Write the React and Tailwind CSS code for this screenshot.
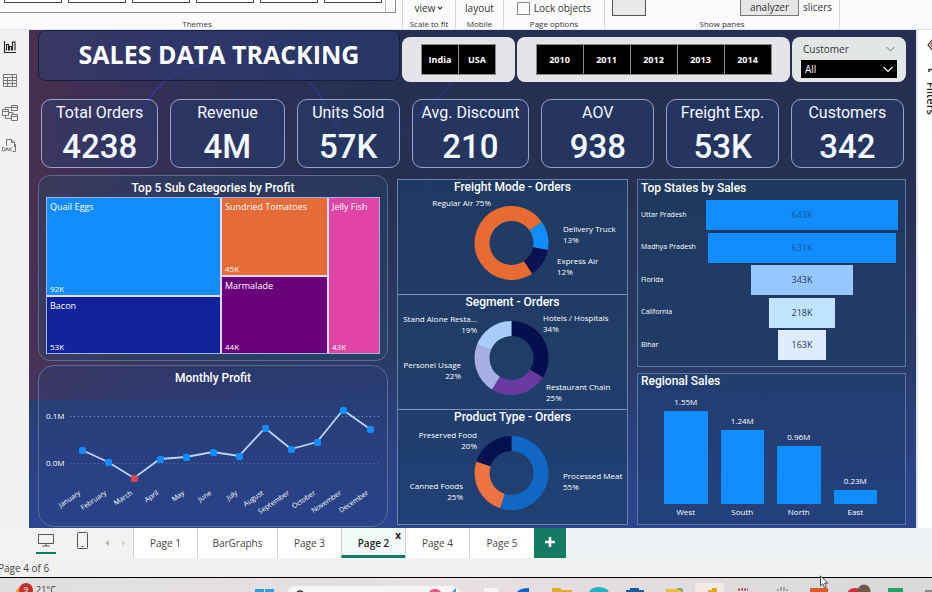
import React from "react";

const SEGOE = "font-['Open_Sans','Noto_Sans',sans-serif]";
const DIN = "font-[Roboto,sans-serif]";

function RibbonGroup({ label, className, children }) {
  return (
    <section className={`flex shrink-0 flex-col justify-end border-r border-[#d8d8d8] ${className}`}>
      <div className="flex h-[18px] items-end justify-center">{children}</div>
      <p className="h-3 text-center text-[8px] leading-[14px] text-[#333]">{label}</p>
    </section>
  );
}

function Ribbon() {
  return (
    <header className="flex h-[30px] shrink-0 overflow-hidden border-b border-[#dfe3ea] bg-[#fbfbfb] text-[#333]">
      <section className="flex w-[403px] shrink-0 flex-col border-r border-[#d8d8d8]">
        <div className="flex h-[13px] w-[396px] items-start gap-[6px] border-r border-b border-[#8c8c8c] pl-1">
          {[0, 1, 2, 3, 4, 5].map((i) => (
            <button key={i} type="button" aria-label={`Theme ${i + 1}`} className="h-[3px] w-[58px] border-x border-b border-[#444] bg-white" />
          ))}
          <span className="-ml-[3px] h-3 border-l border-[#bbb]" />
        </div>
        <p className="mt-[5px] pr-2 text-center text-[8px] leading-3 text-[#333]">Themes</p>
      </section>
      <RibbonGroup label="Scale to fit" className="w-[53px]">
        <button type="button" className="flex items-center gap-0.5 text-[10px] leading-[18px]">
          view
          <svg width="6" height="5" viewBox="0 0 6 5" fill="none" stroke="#333" strokeWidth="1.2"><path d="M1 1l2 2 2-2" /></svg>
        </button>
      </RibbonGroup>
      <RibbonGroup label="Mobile" className="w-[48px]">
        <button type="button" className="text-[10px] leading-[18px]">layout</button>
      </RibbonGroup>
      <RibbonGroup label="Page options" className="w-[101px]">
        <label className="flex items-center gap-1 text-[10px] leading-[18px]">
          <input type="checkbox" className="size-[13px] appearance-none border border-[#888] bg-white" />
          Lock objects
        </label>
      </RibbonGroup>
      <RibbonGroup label="Show panes" className="w-[235px]">
        <div className="flex h-[18px] w-full items-start pl-[7px]">
          <button type="button" aria-label="Pane" className="h-[17px] w-[34px] border-x border-b border-[#555] bg-[#e9e9e9]" />
          <button type="button" className="ml-[94px] h-[17px] w-[59px] border-x border-b border-[#777] bg-[#e6e6e6] text-[10px] leading-4">analyzer</button>
          <button type="button" className="ml-1 text-[10px] leading-4">slicers</button>
        </div>
      </RibbonGroup>
    </header>
  );
}

function LeftRail() {
  const btn = "flex h-[33px] w-full items-center justify-start pl-[2px]";
  return (
    <nav aria-label="Views" className="w-[29px] shrink-0 bg-[#f1f1f1]">
      <button type="button" aria-label="Report view" className={btn}>
        <svg width="15" height="14" viewBox="0 0 15 14" fill="none" stroke="#222" strokeWidth="1.1">
          <path d="M2.5 1v11.5H14" /><path d="M4.5 10.500V4.500h2v6M7.500 10.500V6.500h2v4M10.500 10.500V2h2.500v8.500" />
        </svg>
      </button>
      <button type="button" aria-label="Table view" className={btn}>
        <svg width="15" height="14" viewBox="0 0 15 14" fill="none" stroke="#777" strokeWidth="1">
          <path d="M1.500 1.500h13v12h-13zM1.500 4.500h13M1.500 7.500h13M1.500 10.500h13M5.500 4.500v9M10.500 1.500v12" />
        </svg>
      </button>
      <button type="button" aria-label="Model view" className={btn}>
        <svg width="17" height="16" viewBox="0 0 17 16" fill="none" stroke="#777" strokeWidth="1">
          <path d="M.5 4.500h6v6h-6zM.5 6.500h6M9.500 .5h6v5h-6zM9.500 2.500h6M9.500 9.500h6v6h-6zM9.500 11.500h6M3.500 4.500v-2h6M6.500 7.500h4.500v2M3.500 10.500v3h6" />
        </svg>
      </button>
      <button type="button" aria-label="DAX query view" className={btn}>
        <svg width="15" height="15" viewBox="0 0 15 15" fill="none" stroke="#777" strokeWidth="1">
          <path d="M4.500 8V1.500h5l3 3V9M9.500 1.500v3h3M13.500 6v7.500h-3" />
          <path d="M.5 9.500v3.500h1c1 0 1.500-.8 1.500-1.700S2.500 9.500 1.500 9.500zM3.500 13l1.500-3.500L6.500 13M7 9.500L9.500 13M9.500 9.500L7 13" />
        </svg>
      </button>
    </nav>
  );
}

function RightRail() {
  return (
    <aside className="flex w-4 shrink-0 flex-col items-start overflow-hidden border-l-2 border-[#e4e6ee] bg-white pt-2 pl-[9px]">
      <svg className="shrink-0" width="14" height="14" viewBox="0 0 14 14" fill="none" stroke="#444" strokeWidth="1.2"><path d="M6 1L1 7l5 6" /><circle cx="6" cy="7" r="2" stroke="#b33" /></svg>
      <svg className="mt-4 shrink-0" width="10" height="6" viewBox="0 0 10 6" fill="none" stroke="#333" strokeWidth="1.5"><path d="M2 4V1.500h8" /></svg>
      <p className="mt-2 w-2 shrink-0 text-[11px] leading-2 font-semibold text-[#222] [writing-mode:vertical-rl]">Filters</p>
    </aside>
  );
}

function Backdrop() {
  return (
    <svg className="absolute inset-0 size-full" viewBox="0 0 887 498" preserveAspectRatio="none" fill="none" aria-hidden="true">
      <defs>
        <linearGradient id="base" x1="0" y1="0" x2="0" y2="1">
          <stop offset="0" stopColor="#262f52" /><stop offset=".3" stopColor="#272f52" /><stop offset=".65" stopColor="#2a3a66" /><stop offset="1" stopColor="#2b448c" />
        </linearGradient>
        <linearGradient id="left" x1="0" y1="0" x2="1" y2="0">
          <stop offset="0" stopColor="#51304f" stopOpacity=".8" /><stop offset=".14" stopColor="#45305c" stopOpacity=".5" /><stop offset=".4" stopColor="#333366" stopOpacity="0" />
        </linearGradient>
        <linearGradient id="glow" x1="0" y1="0" x2="0" y2="1">
          <stop offset="0" stopColor="#2a4290" stopOpacity="0" /><stop offset="1" stopColor="#2a4690" stopOpacity=".6" />
        </linearGradient>
      </defs>
      <rect width="887" height="498" fill="url(#base)" />
      <rect width="887" height="370" fill="url(#left)" />
      <rect y="330" width="887" height="168" fill="url(#glow)" />
      <g stroke="#3f3bc4" strokeWidth="2">
        <path d="M112 82C130 48 160 30 200 34" opacity=".55" />
        <path d="M262 36C285 52 295 70 310 100" opacity=".35" />
        <path d="M40 300C70 160 130 20 240 12S370 90 420 200" opacity=".15" />
        <path d="M380 92C400 78 415 62 425 50" opacity=".3" />
        <path d="M0 345C70 330 90 310 110 285" opacity=".25" />
      </g>
    </svg>
  );
}

function Slicer({ name, options }) {
  return (
    <fieldset aria-label={name} className="flex items-center justify-center rounded-lg bg-[#e4e4e9]">
      <div className="flex gap-px bg-[#8b8b8b] p-px">
        {options.map((o) => (
          <button key={o} type="button" className={`h-[29px] bg-black text-center text-[9px] font-bold text-white ${name === "Year" ? "w-[46px]" : "w-9"}`}>{o}</button>
        ))}
      </div>
    </fieldset>
  );
}

function TopRow() {
  return (
    <div className="grid grid-cols-[362fr_113fr_273fr_114fr] gap-x-0.5">
      <div className="flex h-[51px] items-center justify-center rounded-lg border border-[#151d3d] bg-[#2c3d78]/50">
        <h1 className="pb-[3px] text-[25px] leading-8 font-bold text-white">SALES DATA TRACKING</h1>
      </div>
      <div className="grid pt-[7px]"><Slicer name="Country" options={["India", "USA"]} /></div>
      <div className="grid pt-[7px]"><Slicer name="Year" options={["2010", "2011", "2012", "2013", "2014"]} /></div>
      <div className="pt-[7px]">
        <div className="h-[45px] rounded-lg bg-[#e2e6e6] px-[9px] pt-[3px]">
          <label htmlFor="customer" className="flex h-[18px] items-center justify-between px-0.5 text-[10px] text-[#333]">
            Customer
            <svg width="9" height="6" viewBox="0 0 9 6" fill="none" stroke="#777"><path d="M.5 1l4 4 4-4" /></svg>
          </label>
          <div className="relative mt-[2px]">
            <select id="customer" className="block h-[18px] w-full appearance-none bg-black px-1 text-[10px] leading-[18px] text-white">
              <option>All</option>
            </select>
            <svg className="pointer-events-none absolute top-[6px] right-1" width="10" height="7" viewBox="0 0 10 7" fill="none" stroke="#fff" strokeWidth="1.1"><path d="M.5 1l4.500 4.500L9.500 1" /></svg>
          </div>
        </div>
      </div>
    </div>
  );
}

const KPIS = [
  ["Total Orders", "4238"], ["Revenue", "4M"], ["Units Sold", "57K"], ["Avg. Discount", "210"],
  ["AOV", "938"], ["Freight Exp.", "53K"], ["Customers", "342"],
];

function Kpis() {
  return (
    <div className="mt-[17px] grid grid-cols-[117fr_114fr_103fr_117fr_113fr_112fr_113fr] gap-x-3 pr-0.5 pl-[3px]">
      {KPIS.map(([label, value]) => (
        <section key={label} className={`flex h-[69px] flex-col items-center rounded-[10px] border border-[#98a3cc] bg-[#24417a]/35 pt-[3px] whitespace-nowrap text-[#f4f8ff] ${DIN}`}>
          <h2 className="text-[16px] leading-5">{label}</h2>
          <p className="mt-[5px] text-[33px] leading-[38px] font-medium">{value}</p>
        </section>
      ))}
    </div>
  );
}

function Tile({ name, value, className }) {
  return (
    <div className={`flex flex-col justify-between px-[3px] pt-[2px] text-white ${className}`}>
      <span className="text-[9px] leading-[14px] whitespace-nowrap">{name}</span>
      <span className="text-[8px] leading-[13px]">{value}</span>
    </div>
  );
}

function Treemap() {
  return (
    <section className="rounded-xl border border-[#5d6c90] bg-[#244a6c]/35 px-[7px] pb-[6px]">
      <h2 className={`pt-1 pb-px text-center text-[12px] leading-4 font-medium text-white ${DIN}`}>Top 5 Sub Categories by Profit</h2>
      <div className="grid h-[157px] grid-cols-[173fr_105fr_50fr] gap-0.5 border border-[#9fb3e6] bg-[#e3d9f2]">
        <div className="grid grid-rows-[98fr_56fr] gap-0.5">
          <Tile name="Quail Eggs" value="92K" className="bg-[#118dff]" />
          <Tile name="Bacon" value="53K" className="bg-[#12239e]" />
        </div>
        <div className="grid grid-rows-[78fr_76fr] gap-0.5">
          <Tile name="Sundried Tomatoes" value="45K" className="bg-[#e66c37]" />
          <Tile name="Marmalade" value="44K" className="bg-[#6b007b]" />
        </div>
        <Tile name="Jelly Fish" value="43K" className="bg-[#e044a7]" />
      </div>
    </section>
  );
}

const MONTHS = [
  ["January", 43, 68], ["February", 69, 80], ["March", 95, 96], ["April", 121, 77], ["May", 147, 75], ["June", 174, 70],
  ["July", 200, 74], ["August", 226, 46], ["September", 252, 67], ["October", 278, 60], ["November", 304, 28], ["December", 331, 47],
];

function MonthlyProfit() {
  return (
    <section className="rounded-2xl border border-[#5d6c90] bg-[#24407a]/30">
      <h2 className={`pt-1 text-center text-[12px] leading-4 font-medium text-white ${DIN}`}>Monthly Profit</h2>
      <svg className="block h-auto w-full" viewBox="0 4 348 140" role="img" aria-label="Monthly profit">
        <g stroke="#8f9cc0" strokeDasharray="1 3"><path d="M31 34.500H342" /><path d="M31 81.500H342" opacity=".6" /></g>
        <g fill="#fff" fontSize="8"><text x="7" y="37">0.1M</text><text x="7" y="84">0.0M</text></g>
        <polyline fill="none" stroke="#b8d4fa" strokeWidth="1.800" points={MONTHS.map((m) => `${m[1]},${m[2]}`).join(" ")} />
        {MONTHS.map(([name, x, y]) => (
          <g key={name}>
            <rect x={x - 3} y={y - 3} width="7" height="7" rx="2" fill={name === "March" ? "#d64550" : "#118dff"} />
            <text fill="#fff" fontSize="7" textAnchor="end" transform={`translate(${x - 1} 112) rotate(-34)`}>{name}</text>
          </g>
        ))}
      </svg>
    </section>
  );
}

function arc(a0, a1) {
  const cx = 113.5, cy = 49, R = 37, r = 22;
  const p = (a, q) => `${cx + q * Math.sin((a * Math.PI) / 180)} ${cy - q * Math.cos((a * Math.PI) / 180)}`;
  const big = a1 - a0 > 180 ? 1 : 0;
  return `M${p(a0, R)}A${R} ${R} 0 ${big} 1 ${p(a1, R)}L${p(a1, r)}A${r} ${r} 0 ${big} 0 ${p(a0, r)}Z`;
}

const DONUTS = [
  {
    title: "Freight Mode - Orders",
    slices: [[55, 101, "#118dff"], [101, 146, "#0a1250"], [146, 415, "#e96b34"]],
    labels: [[93, 12, "end", ["Regular Air 75%"]], [165, 38, "start", ["Delivery Truck", "13%"]], [159, 70, "start", ["Express Air", "12%"]]],
  },
  {
    title: "Segment - Orders",
    slices: [[0, 122, "#040f4e"], [122, 212, "#6b3aa0"], [212, 291, "#a9afe4"], [291, 360, "#a9cdfb"]],
    labels: [[79, 13, "end", ["Stand Alone Resta...", "19%"]], [145, 12, "start", ["Hotels / Hospitals", "34%"]], [63, 59, "end", ["Personel Usage", "22%"]], [148, 81, "start", ["Restaurant Chain", "25%"]]],
  },
  {
    title: "Product Type - Orders",
    slices: [[0, 198, "#1068c4"], [198, 288, "#ed7440"], [288, 360, "#04134f"]],
    labels: [[79, 14, "end", ["Preserved Food", "20%"]], [65, 65, "end", ["Canned Foods", "25%"]], [165, 55, "start", ["Processed Meat", "55%"]]],
  },
];

function Donuts() {
  return (
    <div className="mt-1 divide-y divide-[#7f92b8] self-start border border-[#6f82a8] bg-[#1d3f6a]/70">
      {DONUTS.map((d) => (
        <section key={d.title}>
          <h2 className={`text-center text-[12px] leading-[14px] font-medium text-white ${DIN}`}>{d.title}</h2>
          <svg className="block h-auto w-full" viewBox="0 0 229 100" role="img" aria-label={d.title}>
            {d.slices.map(([a, b, c]) => <path key={c} d={arc(a, b)} fill={c} />)}
            {d.labels.map(([x, y, anchor, lines]) => (
              <text key={lines[0]} fill="#fff" fontSize="8" textAnchor={anchor}>
                {lines.map((l, i) => <tspan key={l} x={x} y={y + i * 11}>{l}</tspan>)}
              </text>
            ))}
          </svg>
        </section>
      ))}
    </div>
  );
}

const STATES = [
  ["Uttar Pradesh", 643, "bg-[#118dff] text-[#1c5598]"], ["Madhya Pradesh", 631, "bg-[#118dff] text-[#1c5598]"],
  ["Florida", 343, "bg-[#96c8ff] text-[#253a55]"], ["California", 218, "bg-[#c0e3ff] text-[#253a55]"], ["Bihar", 163, "bg-[#deecff] text-[#253a55]"],
];

const REGIONS = [["West", 1.55], ["South", 1.24], ["North", 0.96], ["East", 0.23]];

function TopStates() {
  return (
    <section className="border border-[#5d76a0] bg-[#1c3d66]/70 pr-[7px] pb-[6px] pl-[3px]">
      <h2 className={`text-[12px] leading-4 font-medium text-white ${DIN}`}>Top States by Sales</h2>
      <ul className="mt-1 flex h-[160px] flex-col justify-between">
        {STATES.map(([name, v, cls]) => (
          <li key={name} className="flex items-center">
            <span className="w-[65px] shrink-0 text-[7px] whitespace-nowrap text-white">{name}</span>
            <span className="flex flex-1 justify-center">
              <span className={`h-[30px] text-center text-[9px] leading-[30px] ${cls}`} style={{ width: `${(v / 643) * 100}%` }}>{v}K</span>
            </span>
          </li>
        ))}
      </ul>
    </section>
  );
}

function RegionalSales() {
  return (
    <section className="border border-[#5d76a0] bg-[#1e4070]/60 pb-[6px]">
      <h2 className={`pl-[3px] text-[12px] leading-[15px] font-medium text-white ${DIN}`}>Regional Sales</h2>
      <div className="mt-2 grid grid-cols-4 gap-x-[13px] pr-[28px] pl-[26px]">
        {REGIONS.map(([name, v]) => (
          <div key={name} className="flex h-[121px] flex-col items-center justify-end text-white">
            <span className="text-[8px] leading-[14px]">{v.toFixed(2)}M</span>
            <span className="mt-[2px] w-full shrink-0 bg-[#118dff]" style={{ height: `${Math.round(v * 60)}px` }} />
            <span className="mt-[2px] text-[8px] leading-3">{name}</span>
          </div>
        ))}
      </div>
    </section>
  );
}

function Report() {
  return (
    <main className="relative min-w-0 flex-1 overflow-hidden">
      <Backdrop />
      <div className="relative pr-[10px] pl-[9px]">
        <TopRow />
        <Kpis />
        <div className="mt-[7px] grid grid-cols-[350fr_231fr_269fr] gap-x-[9px]">
          <div className="flex flex-col gap-1"><Treemap /><MonthlyProfit /></div>
          <Donuts />
          <div className="mt-1 flex flex-col gap-[6px]"><TopStates /><RegionalSales /></div>
        </div>
      </div>
    </main>
  );
}

const TABS = [["Page 1", "w-16"], ["BarGraphs", "w-20"], ["Page 3", "w-16"], ["Page 2", "w-16"], ["Page 4", "w-16"], ["Page 5", "w-[65px]"]];

function PageTabs() {
  return (
    <nav aria-label="Pages" className="flex h-[30px] shrink-0 bg-[#edf2f4] text-[#444]">
      <div className="flex w-[133px] shrink-0 items-start bg-[#f2f3f1] pl-9">
        <button type="button" aria-label="Desktop layout" className="flex h-[26px] w-5 flex-col items-center justify-between border-b-2 border-[#117865] pt-[6px]">
          <svg width="16" height="13" viewBox="0 0 16 13" fill="none" stroke="#555"><path d="M.5 .5h15v9H.5zM8 9.500v2.500M4.500 12h7" /></svg>
        </button>
        <button type="button" aria-label="Phone layout" className="mt-1 ml-[21px]">
          <svg width="11" height="17" viewBox="0 0 11 17" fill="none" stroke="#555"><rect x=".5" y=".5" width="10" height="16" rx="1" /><path d="M4.500 14.500h2" /></svg>
        </button>
        <div className="mt-3 ml-[17px] flex gap-[13px]">
          <svg width="4" height="6" viewBox="0 0 4 6" fill="#bbb"><path d="M4 0v6L0 3z" /></svg>
          <svg width="4" height="6" viewBox="0 0 4 6" fill="#d5d5d5"><path d="M0 0v6l4-3z" /></svg>
        </div>
      </div>
      {TABS.map(([t, w]) => (
        <button key={t} type="button" className={`relative border-l border-[#cfd3d3] text-[10px] ${w} ${t === "Page 2" ? "border-b-[3px] border-b-[#117865] bg-[#f2faf9] pt-[3px] font-semibold text-[#222]" : "bg-white"}`}>
          {t}
          {t === "Page 2" && <span className="absolute top-0 right-1 text-[10px] leading-[14px] font-bold">x</span>}
        </button>
      ))}
      <button type="button" aria-label="New page" className="flex w-8 items-center justify-center bg-[#147a62] pb-[3px]">
        <svg width="10" height="10" viewBox="0 0 10 10" stroke="#fff" strokeWidth="2.500"><path d="M5 0v10M0 5h10" /></svg>
      </button>
    </nav>
  );
}

function Taskbar() {
  return (
    <footer className="relative h-[15px] shrink-0 border-t border-black bg-gradient-to-r from-[#e0e0e0] via-[#e8dfe2] to-[#d9d9d9]">
      <svg className="h-[14px] w-full" viewBox="0 0 932 14" preserveAspectRatio="xMidYMin slice" aria-hidden="true">
        <circle cx="21" cy="14" r="5" fill="#f0a030" />
        <circle cx="26" cy="12" r="7" fill="#c4332a" />
        <text x="26" y="14" fill="#fff" fontSize="8" textAnchor="middle">9</text>
        <text x="36" y="15" fill="#333" fontSize="9">21°C</text>
        <path d="M255 11h9v3h-9zM265 11h9v3h-9z" fill="#2aa0e0" />
        <rect x="286" y="8" width="175" height="20" rx="10" fill="#f6f6f6" />
        <circle cx="300" cy="17" r="4" fill="none" stroke="#333" strokeWidth="1.500" />
        <ellipse cx="435" cy="15" rx="6" ry="4" fill="#e05a8a" /><path d="M452 14l4-4v4z" fill="#3a9bd5" />
        <rect x="484" y="10" width="14" height="6" fill="#f5f5f5" />
        <path d="M517 14q3-4 12-4v4z" fill="#1461c9" />
        <path d="M552 14v-4h8l2 2h10v2z" fill="#dfae2c" />
        <ellipse cx="599" cy="15" rx="10" ry="6" fill="#22b3c5" />
        <path d="M626 14v-2h4v-2h9v2h5v2z" fill="#1c5a9a" />
        <path d="M666 14v-3h15v3z" fill="#e7bf3c" /><path d="M677 11h5v3" fill="none" stroke="#3a7a4c" />
        <rect x="695" y="5" width="29" height="9" fill="#f2e8e4" /><path d="M708 14v-2h4v-2h5v4z" fill="#e0a91c" />
        <path d="M738 11.500h10" stroke="#b9374a" strokeWidth="2" strokeDasharray="2 1" />
        <path d="M778 13v-2m3 2v-4m3 4V9m3 4v-2" stroke="#666" />
        <path d="M810 14v-4h18v4z" fill="#dd5a2c" />
        <ellipse cx="855" cy="14" rx="7" ry="4" fill="#d4323c" /><circle cx="864" cy="13" r="6.500" fill="#6d5a4a" />
        <path d="M888 14v-4h15v4z" fill="#28a06a" /><path d="M925 12h7v2h-7z" fill="#888" />
      </svg>
      <svg className="absolute -top-[3px] left-[88%]" width="9" height="14" viewBox="0 0 9 14" fill="#fff" stroke="#222" strokeWidth=".8"><path d="M.5 .8v10l2.300-2.100 1.700 4 1.800-.8-1.700-3.800h3.200z" /></svg>
    </footer>
  );
}

export default function App() {
  return (
    <div className={`flex h-screen flex-col overflow-hidden bg-[#f1f1f0] ${SEGOE}`}>
      <Ribbon />
      <div className="flex min-h-0 flex-1"><LeftRail /><Report /><RightRail /></div>
      <PageTabs />
      <p className="h-[19px] shrink-0 bg-[#f1f1f0] text-[10px] leading-[21px] text-[#444]"><span className="-ml-0.5">Page 4 of 6</span></p>
      <Taskbar />
    </div>
  );
}
